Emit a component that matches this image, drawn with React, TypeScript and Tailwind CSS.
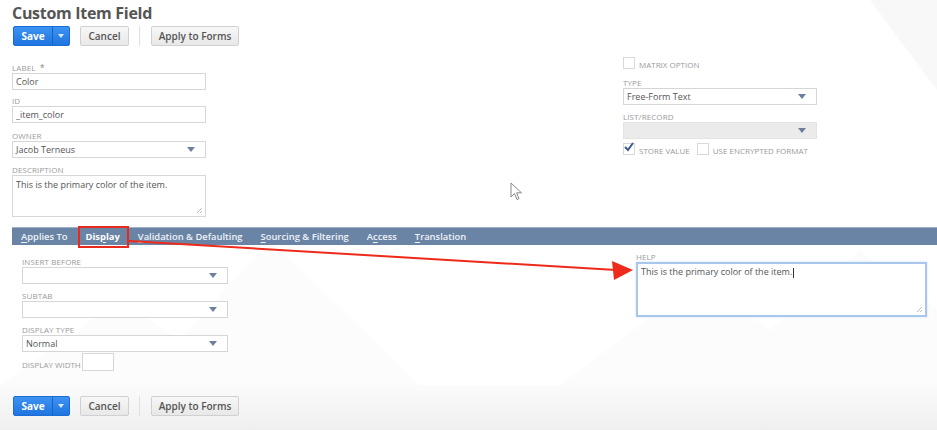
import React from "react";

const Arrow = () => (
  <svg width="8" height="5" viewBox="0 0 8 5" className="shrink-0">
    <path d="M0 0 L8 0 L4 5 Z" fill="#6d7f9c" />
  </svg>
);

const Label = ({ children, className = "" }: { children: React.ReactNode; className?: string }) => (
  <div className={"text-[8px] leading-[11px] uppercase text-[#9a9a9a] tracking-[0.1px] " + className}>{children}</div>
);

const Input = ({ value = "", w = "w-[194px]" }: { value?: string; w?: string }) => (
  <div className={"h-[17px] border border-[#d6d6d6] bg-white flex items-center px-[3px] text-[9px] text-[#555] " + w}>
    {value}
  </div>
);

const Select = ({ value = "", w = "w-[194px]", disabled = false }: { value?: string; w?: string; disabled?: boolean }) => (
  <div
    className={
      "h-[17px] border flex items-center justify-between pl-[3px] pr-[10px] text-[9px] text-[#555] " +
      (disabled ? "bg-[#ebebeb] border-[#e3e3e3] " : "bg-white border-[#d6d6d6] ") +
      w
    }
  >
    <span>{value}</span>
    <Arrow />
  </div>
);

const Grip = () => (
  <svg width="7" height="7" viewBox="0 0 7 7" className="absolute right-[2px] bottom-[2px]">
    <path d="M1 6 L6 1 M4 6 L6 4" stroke="#aaa" strokeWidth="0.8" />
  </svg>
);

const Check = ({ checked = false }: { checked?: boolean }) => (
  <div className="relative w-[12px] h-[12px] border border-[#d9d9d9] bg-white">
    {checked && (
      <svg width="12" height="12" viewBox="0 0 12 12" className="absolute -left-[1px] -top-[3px]">
        <path d="M2 6 L5 9 L10 2" stroke="#3d5a8a" strokeWidth="2" fill="none" />
      </svg>
    )}
  </div>
);

const Buttons = () => (
  <div className="flex items-center h-[20px]">
    <div className="flex h-[20px] w-[57px] rounded-[2px] bg-gradient-to-b from-[#3c93f2] to-[#1f74e0] border border-[#1d6cd3] text-white text-[10px] font-bold">
      <div className="w-[38px] flex items-center justify-center">Save</div>
      <div className="w-px bg-[#1a62c0]" />
      <div className="flex-1 flex items-center justify-center">
        <svg width="6" height="4" viewBox="0 0 6 4"><path d="M0 0 L6 0 L3 4 Z" fill="#dbe9fb" /></svg>
      </div>
    </div>
    <div className="ml-[10px] h-[20px] w-[49px] rounded-[2px] bg-gradient-to-b from-[#f7f7f7] to-[#e8e8e8] border border-[#d0d0d0] flex items-center justify-center text-[10px] font-semibold text-[#555]">
      Cancel
    </div>
    <div className="ml-[10px] w-px h-[20px] bg-[#e0e0e0]" />
    <div className="ml-[11px] h-[20px] w-[88px] rounded-[2px] bg-gradient-to-b from-[#f7f7f7] to-[#e8e8e8] border border-[#d0d0d0] flex items-center justify-center text-[10px] font-semibold text-[#555]">
      Apply to Forms
    </div>
  </div>
);

const Tab = ({ first, rest, pre = "", active = false }: { first: string; rest: string; pre?: string; active?: boolean }) => (
  <span className={"text-[9.4px] leading-[12px] " + (active ? "font-bold text-white" : "font-semibold text-[#eef2f8]")}>
    {pre}
    <span className="underline underline-offset-[2px]">{first}</span>
    {rest}
  </span>
);

export default function App() {
  return (
    <div className="relative w-[937px] h-[430px] bg-white overflow-hidden font-['Open_Sans',sans-serif]">
      {/* faint watermark background */}
      <svg className="absolute inset-0 pointer-events-none" width="937" height="430">
        <polygon points="870,0 937,0 937,90" fill="#f8f8f8" />
        <polygon points="0,385 120,300 180,340 270,240 420,385" fill="#fcfcfc" />
        <polygon points="560,385 700,280 770,330 860,250 937,310 937,385" fill="#fcfcfc" />
      </svg>

      <div className="relative flex flex-col h-full">
        <div className="pl-[13px] pt-[1px]">
          <h1 className="text-[16px] leading-[24px] font-bold text-[#555] tracking-[-0.3px] -ml-[1px]">Custom Item Field</h1>
          <div className="mt-[1px]">
            <Buttons />
          </div>

          <div className="flex mt-[10px]">
            <div className="w-[194px] -ml-[1px]">
              <div className="mt-[6px]">
                <Label>
                  Label <span className="text-[#888] text-[9px] ml-[2px]">*</span>
                </Label>
                <Input value="Color" />
              </div>
              <div className="mt-[5px]">
                <Label>ID</Label>
                <Input value="_item_color" />
              </div>
              <div className="mt-[7px]">
                <Label>Owner</Label>
                <Select value="Jacob Terneus" />
              </div>
              <div className="mt-[6px]">
                <Label>Description</Label>
                <div className="relative w-[194px] h-[42px] border border-[#d6d6d6] bg-white px-[3px] pt-[2px] text-[9px] text-[#555]">
                  This is the primary color of the item.
                  <Grip />
                </div>
              </div>
            </div>

            <div className="ml-[417px] w-[194px] mt-[1px]">
              <div className="flex items-end gap-[4px]">
                <Check />
                <span className="text-[8px] leading-[9px] uppercase text-[#9a9a9a]">Matrix Option</span>
              </div>
              <div className="mt-[8px]">
                <Label>Type</Label>
                <Select value="Free-Form Text" />
              </div>
              <div className="mt-[6px]">
                <Label>List/Record</Label>
                <Select disabled />
              </div>
              <div className="flex items-end mt-[4px]">
                <Check checked />
                <span className="ml-[4px] text-[8px] leading-[9px] uppercase text-[#9a9a9a]">Store Value</span>
                <div className="ml-[7px]"><Check /></div>
                <span className="ml-[4px] text-[8px] leading-[9px] uppercase text-[#9a9a9a]">Use Encrypted Format</span>
              </div>
            </div>
          </div>
        </div>

        {/* tab bar */}
        <div className="ml-[12px] mt-[10px] h-[18px] bg-[#6a84a6] border-t border-[#9fb1c8] flex items-center pl-[9px] gap-[18px]">
          <Tab first="A" rest="pplies To" />
          <div className="relative flex items-center">
            <Tab pre="Dis" first="p" rest="lay" active />
            <div className="absolute -left-[8px] -right-[9px] -top-[5px] -bottom-[5px] border-2 border-[#e8291c]" />
          </div>
          <Tab first="V" rest="alidation & Defaulting" />
          <Tab first="S" rest="ourcing & Filtering" />
          <Tab pre="A" first="c" rest="cess" />
          <Tab first="T" rest="ranslation" />
        </div>

        <div className="flex">
          <div className="ml-[22px] w-[206px]">
            <div className="mt-[11px]">
              <Label>Insert Before</Label>
              <Select w="w-[206px]" />
            </div>
            <div className="mt-[6px]">
              <Label>Subtab</Label>
              <Select w="w-[206px]" />
            </div>
            <div className="mt-[6px]">
              <Label>Display Type</Label>
              <Select value="Normal" w="w-[206px]" />
            </div>
            <div className="flex items-end mt-[1px]">
              <span className="text-[8px] leading-[10px] uppercase text-[#9a9a9a] mb-[1px]">Display Width</span>
              <div className="w-[32px] h-[18px] border border-[#d6d6d6] bg-white ml-[1px]" />
            </div>
          </div>

          <div className="ml-[408px] mt-[6px]">
            <Label>Help</Label>
            <div className="relative w-[291px] h-[55px] border-2 border-[#a9c6ec] bg-white px-[3px] pt-[1px] text-[9px] text-[#555] shadow-[0_0_2px_#c7dbf5]">
              This is the primary color of the item.
              <span className="inline-block w-px h-[10px] bg-[#333] align-middle ml-[1px]" />
              <Grip />
            </div>
          </div>
        </div>

        {/* footer */}
        <div className="mt-auto h-[45px] bg-gradient-to-b from-[#fbfbfb] to-[#efefef] pl-[13px] pt-[11px]">
          <Buttons />
        </div>
      </div>

      {/* annotation arrow */}
      <svg className="absolute inset-0 pointer-events-none" width="937" height="430">
        <line x1="129" y1="241" x2="616" y2="270" stroke="#ee2a1a" strokeWidth="2" />
        <polygon points="633,270 612,261 614,280" fill="#ee2a1a" />
      </svg>

      {/* mouse cursor */}
      <svg className="absolute left-[510px] top-[182px]" width="14" height="20" viewBox="0 0 14 20">
        <path d="M1 1 L1 15 L4.5 11.5 L7 17.5 L9 16.6 L6.6 10.8 L11.5 10.8 Z" fill="white" stroke="#888" strokeWidth="1" />
      </svg>
    </div>
  );
}
